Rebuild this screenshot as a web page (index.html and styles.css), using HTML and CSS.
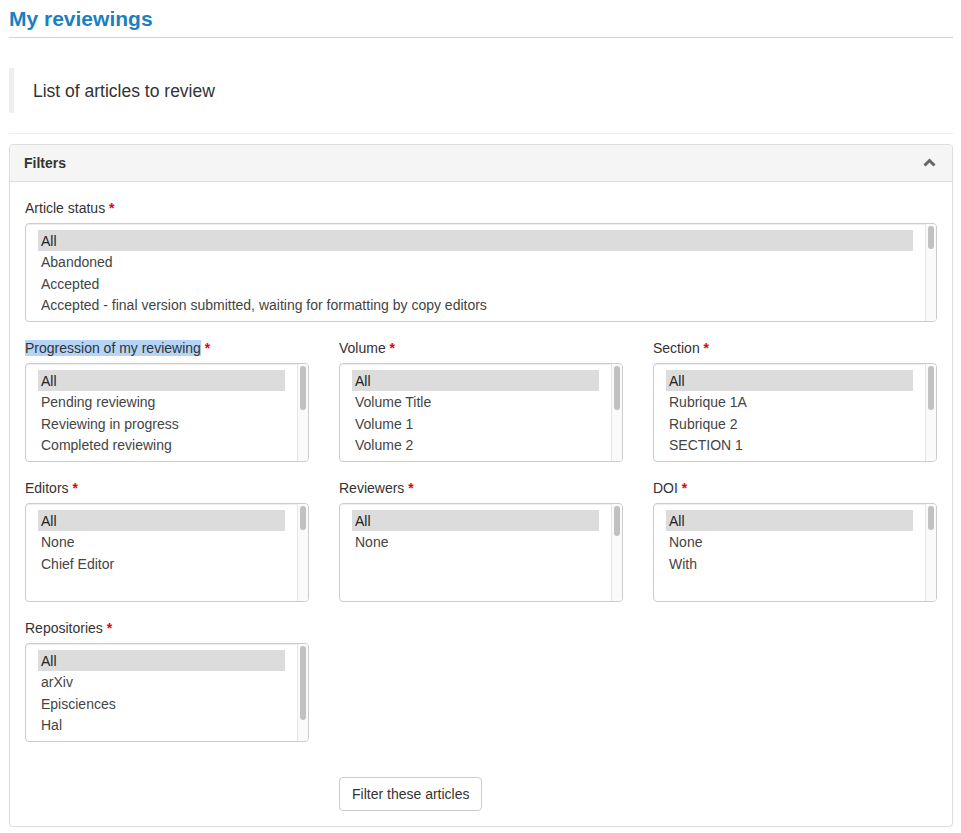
FILE: index.html
```html
<!DOCTYPE html>
<html lang="en">
<head>
<meta charset="utf-8">
<title>My reviewings</title>
<link rel="stylesheet" href="styles.css">
</head>
<body>
<div class="page">
  <h1 class="page-title">My reviewings</h1>
  <blockquote class="intro">List of articles to review</blockquote>
  <hr class="sep">
  <section class="panel">
    <div class="panel-heading">
      <span class="panel-title">Filters</span>
      <svg class="chevron" width="13" height="9" viewBox="0 0 13 9"><path d="M1.5 7.5 L6.5 2.5 L11.5 7.5" fill="none" stroke="#666" stroke-width="3"/></svg>
    </div>
    <div class="panel-body">
      <div class="form-group">
        <label class="label">Article status <span class="req">*</span></label>
        <div class="listbox">
          <div class="options">
            <div class="opt sel">All</div>
            <div class="opt">Abandoned</div>
            <div class="opt">Accepted</div>
            <div class="opt">Accepted - final version submitted, waiting for formatting by copy editors</div>
            <div class="opt">Accepted - waiting for author's final version</div>
          </div>
          <div class="track"><div class="thumb t23"></div></div>
        </div>
      </div>
      <div class="grid">
        <div class="form-group">
          <label class="label"><span class="picked">Progression of my reviewing</span> <span class="req">*</span></label>
          <div class="listbox">
            <div class="options">
              <div class="opt sel">All</div>
              <div class="opt">Pending reviewing</div>
              <div class="opt">Reviewing in progress</div>
              <div class="opt">Completed reviewing</div>
              <div class="opt">Refused reviewing</div>
            </div>
            <div class="track"><div class="thumb t44"></div></div>
          </div>
        </div>
        <div class="form-group">
          <label class="label">Volume <span class="req">*</span></label>
          <div class="listbox">
            <div class="options">
              <div class="opt sel">All</div>
              <div class="opt">Volume Title</div>
              <div class="opt">Volume 1</div>
              <div class="opt">Volume 2</div>
              <div class="opt">Volume 3</div>
            </div>
            <div class="track"><div class="thumb t44"></div></div>
          </div>
        </div>
        <div class="form-group">
          <label class="label">Section <span class="req">*</span></label>
          <div class="listbox">
            <div class="options">
              <div class="opt sel">All</div>
              <div class="opt">Rubrique 1A</div>
              <div class="opt">Rubrique 2</div>
              <div class="opt">SECTION 1</div>
              <div class="opt">SECTION 2</div>
            </div>
            <div class="track"><div class="thumb t44"></div></div>
          </div>
        </div>
        <div class="form-group">
          <label class="label">Editors <span class="req">*</span></label>
          <div class="listbox">
            <div class="options">
              <div class="opt sel">All</div>
              <div class="opt">None</div>
              <div class="opt">Chief Editor</div>
            </div>
            <div class="track"><div class="thumb t24"></div></div>
          </div>
        </div>
        <div class="form-group">
          <label class="label">Reviewers <span class="req">*</span></label>
          <div class="listbox">
            <div class="options">
              <div class="opt sel">All</div>
              <div class="opt">None</div>
            </div>
            <div class="track"><div class="thumb t30"></div></div>
          </div>
        </div>
        <div class="form-group">
          <label class="label">DOI <span class="req">*</span></label>
          <div class="listbox">
            <div class="options">
              <div class="opt sel">All</div>
              <div class="opt">None</div>
              <div class="opt">With</div>
            </div>
            <div class="track"><div class="thumb t24"></div></div>
          </div>
        </div>
        <div class="form-group">
          <label class="label">Repositories <span class="req">*</span></label>
          <div class="listbox">
            <div class="options">
              <div class="opt sel">All</div>
              <div class="opt">arXiv</div>
              <div class="opt">Episciences</div>
              <div class="opt">Hal</div>
              <div class="opt">Zenodo</div>
            </div>
            <div class="track"><div class="thumb t74"></div></div>
          </div>
        </div>
        <div class="btn-cell">
          <button class="btn" type="button">Filter these articles</button>
        </div>
      </div>
    </div>
  </section>
</div>
</body>
</html>
```

FILE: styles.css
```css
html, body {
  margin: 0;
  padding: 0;
  background: #fff;
}
body {
  font-family: "Liberation Sans", Arial, Helvetica, sans-serif;
  font-size: 14px;
  line-height: 20px;
  color: #333;
}
.page {
  padding: 0 8px 0 9px;
}
.page-title {
  margin: 0;
  padding: 6px 0 5px;
  font-size: 21px;
  line-height: 26px;
  font-weight: bold;
  color: #1a80c2;
  border-bottom: 1px solid #bcdaed;
}
.intro {
  margin: 30px 0 0;
  padding: 11px 20px 9px 19px;
  border-left: 5px solid #eee;
  font-size: 17.5px;
  line-height: 25px;
  color: #333;
}
.sep {
  margin: 20px 0 10px;
  border: 0;
  border-top: 1px solid #eee;
  height: 0;
}
.panel {
  border: 1px solid #ddd;
  border-radius: 4px;
  box-shadow: 0 1px 1px rgba(0,0,0,0.05);
}
.panel-heading {
  display: flex;
  align-items: center;
  justify-content: space-between;
  height: 36px;
  padding: 0 16px 0 14px;
  background: #f5f5f5;
  border-bottom: 1px solid #ddd;
  border-radius: 3px 3px 0 0;
}
.panel-title {
  font-weight: bold;
  font-size: 14px;
  color: #333;
}
.chevron {
  display: block;
  margin-top: -1px;
}
.panel-body {
  padding: 16px 15px 15px;
}
.form-group {
  margin-bottom: 16px;
}
.label {
  display: block;
  margin-bottom: 5px;
  line-height: 20px;
  color: #333;
}
.req {
  color: #e00;
  font-weight: bold;
}
.picked {
  background: #b4d4f8;
}
.grid {
  display: grid;
  grid-template-columns: repeat(3, 1fr);
  column-gap: 30px;
}
.listbox {
  display: flex;
  height: 99px;
  box-sizing: border-box;
  border: 1px solid #ccc;
  border-radius: 4px;
  box-shadow: inset 0 1px 1px rgba(0,0,0,0.075);
  overflow: hidden;
  background: #fff;
}
.options {
  flex: 1;
  min-width: 0;
  padding: 6px 12px 0;
  overflow: hidden;
}
.opt {
  box-sizing: border-box;
  height: 21.4px;
  padding: 1px 0 0 3px;
  line-height: 20.4px;
  white-space: nowrap;
  overflow: hidden;
  color: #444;
}
.opt.sel {
  background: #dcdcdc;
  color: #222;
}
.track {
  flex: none;
  width: 11px;
  box-sizing: border-box;
  background: #fafafa;
  border-left: 1px solid #e6e6e6;
  padding: 2px 0 0 2px;
}
.thumb {
  width: 6px;
  background: #c1c1c1;
  border-radius: 3px;
}
.t23 { height: 23px; }
.t24 { height: 24px; }
.t30 { height: 30px; }
.t44 { height: 44px; }
.t74 { height: 74px; }
.btn-cell {
  grid-column: 2;
  grid-row: 4;
  padding-top: 19px;
}
.btn {
  display: inline-block;
  height: 34px;
  padding: 0 12px;
  font-family: "Liberation Sans", Arial, Helvetica, sans-serif;
  font-size: 14px;
  line-height: 32px;
  color: #333;
  background: #fff;
  border: 1px solid #ccc;
  border-radius: 4px;
  cursor: pointer;
}
```
